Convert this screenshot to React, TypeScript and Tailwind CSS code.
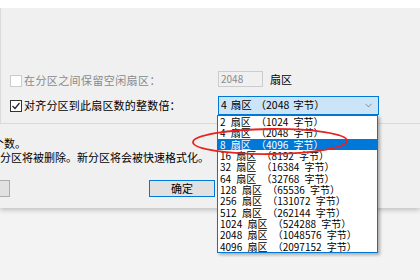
import { ChevronDown } from 'lucide-react'

const font = { fontFamily: '"Noto Sans CJK SC", "Noto Sans", sans-serif' }

const options = [
  ['2', '1024'],
  ['4', '2048'],
  ['8', '4096'],
  ['16', '8192'],
  ['32', '16384'],
  ['64', '32768'],
  ['128', '65536'],
  ['256', '131072'],
  ['512', '262144'],
  ['1024', '524288'],
  ['2048', '1048576'],
  ['4096', '2097152']
]

const App = () => {
  return (
    <div
      className="relative w-[420px] h-[280px] overflow-hidden bg-[#f3f3f3] text-black"
      style={font}
    >
      <div className="h-[208px] bg-[#f0f0f0] shadow-[0_2px_5px_rgba(0,0,0,0.22)] flex flex-col">
        <div className="h-[8px] bg-white" />

        <div className="h-[116px] border-l border-b border-[#dadada] pl-[9px] pt-[63px] flex flex-col">
          <div className="flex items-center h-[16px]">
            <div className="w-[12px] h-[12px] mt-[4px] border border-[#cccccc] bg-white" />
            <span className="w-[194px] ml-[2px] mt-[2px] text-[11px] leading-none tracking-[0.4px] text-[#8a8a8a]">
              在分区之间保留空闲扇区：
            </span>
            <div className="w-[45px] h-[16px] border border-[#cccccc] bg-[#f0f0f0] text-[10px] leading-[14px] pl-[2px] text-[#8a8a8a]">
              2048
            </div>
            <span className="ml-[7px] text-[11px] leading-none">扇区</span>
          </div>

          <div className="flex items-center h-[19px] mt-[9px]">
            <div className="w-[12px] h-[12px] border border-[#333333] bg-white flex items-center justify-center">
              <svg width="10" height="10" viewBox="0 0 10 10">
                <polyline points="1.5,5 4,7.5 8.5,2" fill="none" stroke="#222" strokeWidth="1.2" />
              </svg>
            </div>
            <span className="w-[194px] ml-[2px] text-[11px] leading-none tracking-[0.2px]">
              对齐分区到此扇区数的整数倍：
            </span>
            <div className="w-[161px] h-[19px] border border-[#0078d7] bg-[#cce4f7] flex items-center justify-between pl-[2px] pr-[4px] text-[10.5px] leading-none">
              <span className="whitespace-pre [word-spacing:1.5px]">4 扇区 （2048 字节）</span>
              <ChevronDown size={11} strokeWidth={1.3} className="text-[#555]" />
            </div>
          </div>
        </div>

        <div className="pt-[12px] text-[11px] leading-[14px]">
          <p className="ml-[-7px]">个数。</p>
          <p>分区将被删除。新分区将会被快速格式化。</p>
        </div>

        <div className="flex mt-[16px] h-[17px]">
          <div className="w-[70px] ml-[-60px] border border-[#adadad] bg-[#e1e1e1]" />
          <div className="w-[66px] ml-[139px] border border-[#0078d7] bg-[#e1e1e1] flex items-center justify-center text-[11px] leading-none">
            确定
          </div>
        </div>
      </div>

      <div className="absolute left-[217px] top-[115px] w-[161px] h-[138px] border border-[#0078d7] bg-white shadow-[2px_2px_3px_rgba(0,0,0,0.3)] overflow-hidden">
        {options.map(([n, b]) => (
          <div
            key={n}
            className={`h-[11.33px] pl-[2px] text-[10px] leading-[11.33px] whitespace-pre [word-spacing:3px] ${n === '8' ? 'bg-[#0078d7] text-white' : ''}`}
          >
            {`${n} 扇区 （${b} 字节）`}
          </div>
        ))}
      </div>

      <svg className="absolute left-[190px] top-[126px]" width="162" height="32" viewBox="0 0 162 32">
        <ellipse cx="80" cy="15.5" rx="77" ry="12.5" fill="none" stroke="#e8231f" strokeWidth="1.8" transform="rotate(-0.6 80 15.5)" />
      </svg>
    </div>
  )
}

export default App
